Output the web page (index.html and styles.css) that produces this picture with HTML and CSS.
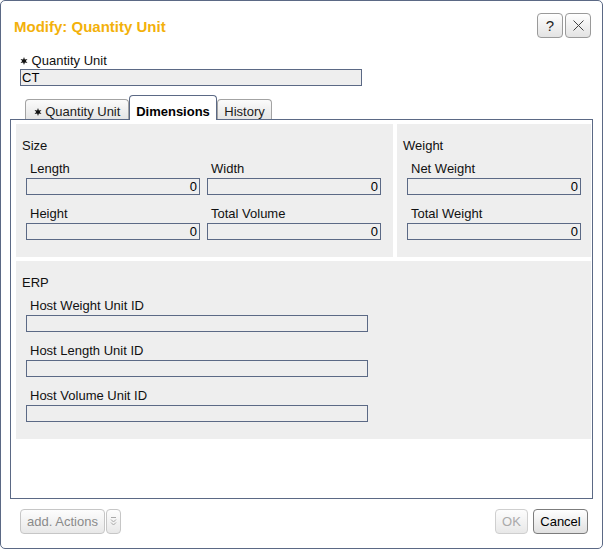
FILE: index.html
```html
<!DOCTYPE html>
<html>
<head>
<meta charset="utf-8">
<title>Modify: Quantity Unit</title>
<link rel="stylesheet" href="styles.css">
</head>
<body>
<div class="dialog">
  <div class="header">
    <div class="title">Modify: Quantity Unit</div>
    <div class="hbtns">
      <button class="hbtn">?</button>
      <button class="hbtn"><svg width="11" height="11" viewBox="0 0 11 11"><path d="M0.5 0.5 L10.5 10.5 M10.5 0.5 L0.5 10.5" stroke="#444" stroke-width="1" fill="none"/></svg></button>
    </div>
  </div>

  <div class="topfield">
    <div class="toplabel"><svg class="req" width="8" height="8" viewBox="0 0 8 8"><polygon points="4,0 4.9,2.45 7.46,2 5.8,4 7.46,6 4.9,5.55 4,8 3.1,5.55 0.54,6 2.2,4 0.54,2 3.1,2.45" fill="#111"/></svg> Quantity Unit</div>
    <div class="input input-top">CT</div>
  </div>

  <div class="tabs">
    <div class="tab tab-1"><svg class="req" width="8" height="8" viewBox="0 0 8 8"><polygon points="4,0 4.9,2.45 7.46,2 5.8,4 7.46,6 4.9,5.55 4,8 3.1,5.55 0.54,6 2.2,4 0.54,2 3.1,2.45" fill="#111"/></svg> Quantity Unit</div>
    <div class="tab tab-active">Dimensions</div>
    <div class="tab tab-3">History</div>
  </div>

  <div class="panel">
    <div class="row">
      <div class="group group-size">
        <div class="gtitle">Size</div>
        <div class="fields fields-2">
          <div class="field"><div class="flabel">Length</div><div class="input num">0</div></div>
          <div class="field"><div class="flabel">Width</div><div class="input num">0</div></div>
          <div class="field"><div class="flabel">Height</div><div class="input num">0</div></div>
          <div class="field"><div class="flabel">Total Volume</div><div class="input num">0</div></div>
        </div>
      </div>
      <div class="group group-weight">
        <div class="gtitle">Weight</div>
        <div class="fields fields-1">
          <div class="field"><div class="flabel">Net Weight</div><div class="input num">0</div></div>
          <div class="field"><div class="flabel">Total Weight</div><div class="input num">0</div></div>
        </div>
      </div>
    </div>
    <div class="group group-erp">
      <div class="gtitle">ERP</div>
      <div class="fields fields-wide">
        <div class="field"><div class="flabel">Host Weight Unit ID</div><div class="input"></div></div>
        <div class="field"><div class="flabel">Host Length Unit ID</div><div class="input"></div></div>
        <div class="field"><div class="flabel">Host Volume Unit ID</div><div class="input"></div></div>
      </div>
    </div>
  </div>

  <div class="footer">
    <div class="fleft">
      <button class="btn btn-disabled btn-actions">add. Actions</button>
      <button class="btn btn-disabled btn-drop"><svg width="7" height="10" viewBox="0 0 7 10"><path d="M1 0.5 H6 M1 2.5 L3.5 5 L6 2.5 M1 5.5 L3.5 8 L6 5.5" stroke="#a8a8a8" stroke-width="1" fill="none"/></svg></button>
    </div>
    <div class="fright">
      <button class="btn btn-disabled btn-ok">OK</button>
      <button class="btn btn-cancel">Cancel</button>
    </div>
  </div>
</div>
</body>
</html>
```

FILE: styles.css
```css
* { box-sizing: border-box; }

body {
  margin: 0;
  background: #fff;
  font-family: "Liberation Sans", Arial, sans-serif;
  font-size: 13px;
  color: #111;
}

.dialog {
  width: 603px;
  height: 549px;
  border: 1px solid #5b6985;
  border-radius: 5px;
  padding: 0 9px;
  display: flex;
  flex-direction: column;
  background: #fff;
}

.header {
  display: flex;
  justify-content: space-between;
  align-items: flex-start;
  padding: 12px 2px 0 4px;
}

.title {
  margin-top: 5px;
  font-size: 15px;
  line-height: 18px;
  font-weight: bold;
  color: #f3b10b;
}

.hbtns {
  display: flex;
  gap: 2px;
}

.hbtn {
  width: 26px;
  height: 25px;
  padding: 0;
  border: 1px solid #9a9a9a;
  border-radius: 4px;
  background: linear-gradient(#ffffff, #e3e3e3);
  font-family: "Liberation Sans", Arial, sans-serif;
  font-size: 15px;
  color: #222;
  display: flex;
  align-items: center;
  justify-content: center;
}

.req {
  vertical-align: 0px;
}

.topfield {
  margin-top: 15px;
  padding-left: 10px;
}

.toplabel {
  line-height: 16px;
}

.input {
  height: 17px;
  border: 1px solid #5b6985;
  background: #eeeeee;
  line-height: 15px;
  padding: 0 2px 0 1px;
  color: #000;
}

.input-top {
  width: 342px;
}

.input.num {
  text-align: right;
}

.tabs {
  display: flex;
  align-items: flex-end;
  margin-top: 9px;
  margin-bottom: -1px;
  padding-left: 15px;
  position: relative;
  z-index: 1;
}

.tab {
  height: 20px;
  padding-top: 4px;
  line-height: 15px;
  margin-bottom: 1px;
  border: 1px solid #a3a3a3;
  border-bottom: none;
  border-radius: 4px 4px 0 0;
  background: linear-gradient(#fbfbfb, #e5e5e5);
  text-align: center;
  color: #1b1b1b;
  white-space: nowrap;
}

.tab-1 { width: 104px; }
.tab-3 { width: 55px; }

.tab-active {
  width: 88px;
  height: 25px;
  padding-top: 8px;
  margin-bottom: 0;
  border-color: #5b6985;
  background: #fff;
  font-weight: bold;
  color: #000;
}

.panel {
  flex: 1;
  border: 1px solid #5b6985;
  padding: 4px 1px 0 5px;
  background: #fff;
}

.row {
  display: flex;
  gap: 4px;
}

.group {
  background: #eeeeee;
  padding: 14px 0 17px 6px;
}

.group-size { flex: 1; }
.group-weight { width: 194px; }
.group-erp { margin-top: 4px; }

.gtitle {
  line-height: 15px;
}

.fields {
  margin-top: 7px;
  padding-left: 4px;
  display: grid;
  column-gap: 7px;
  row-gap: 10px;
}

.fields-2 { grid-template-columns: 174px 174px; }
.fields-1 { grid-template-columns: 174px; }
.fields-wide { grid-template-columns: 342px; }

.flabel {
  padding-top: 2px;
  line-height: 14px;
  padding-left: 4px;
  margin-bottom: 2px;
}

.footer {
  display: flex;
  justify-content: space-between;
  padding: 10px 5px 14px 10px;
}

.fleft, .fright {
  display: flex;
}

.fleft { gap: 1px; }
.fright { gap: 5px; }

.btn {
  height: 25px;
  padding: 0;
  border: 1px solid #c6c6c6;
  border-radius: 4px;
  background: linear-gradient(#fdfdfd, #e8e8e8);
  font-family: "Liberation Sans", Arial, sans-serif;
  font-size: 13px;
  line-height: 23px;
  color: #8a8a8a;
  display: flex;
  align-items: center;
  justify-content: center;
}

.btn-actions { width: 85px; }
.btn-drop { width: 15px; }
.btn-ok { width: 33px; color: #aaaaaa; border-color: #cfcfcf; }

.btn-cancel {
  width: 55px;
  border-color: #7c7c7c;
  background: linear-gradient(#ffffff, #e0e0e0);
  color: #000;
}
```
